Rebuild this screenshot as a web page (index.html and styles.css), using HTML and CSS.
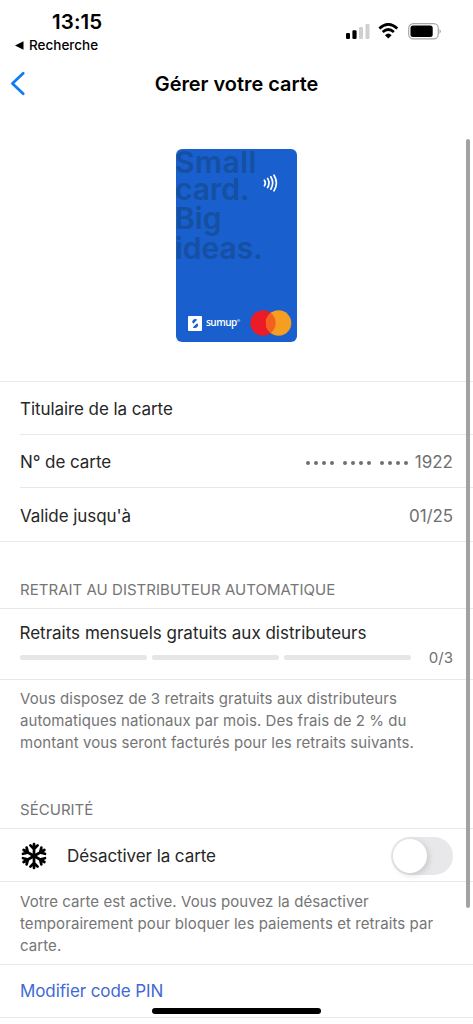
FILE: index.html
```html
<!DOCTYPE html>
<html lang="fr">
<head>
<meta charset="utf-8">
<title>Gérer votre carte</title>
<link rel="stylesheet" href="styles.css">
</head>
<body>
<div class="screen">
  <header class="status">
    <div class="status-left">
      <div class="clock">13:15</div>
      <div class="return-app"><svg width="9" height="9" viewBox="0 0 9 9"><path d="M0 4.5L8.5 0.3V8.7Z"/></svg><span>Recherche</span></div>
    </div>
    <div class="status-icons">
      <svg width="25" height="17" viewBox="0 0 25 17"><rect x="0" y="10" width="4" height="6" rx="1.2"/><rect x="6.4" y="7.2" width="4.2" height="8.8" rx="1.2"/><rect x="13" y="4" width="4" height="12" rx="1.2" fill="#d0d0d0"/><rect x="19.5" y="1" width="4" height="15" rx="1.2" fill="#d0d0d0"/></svg>
      <svg class="wifi" width="21" height="16" viewBox="0 0 21 16"><path d="M1.3 5.4Q10.3-2.6 19.3 5.4M4.7 9Q10.3 4 15.9 9" fill="none" stroke="#000" stroke-width="2.7"/><path d="M6.9 12.2Q10.3 9 13.7 12.2L10.3 15.6Z"/></svg>
      <svg class="battery" width="34" height="17" viewBox="0 0 34 17"><rect x=".7" y=".7" width="29.6" height="15.2" rx="4.6" fill="none" stroke="#a7a7a7" stroke-width="1.2"/><rect x="2.5" y="2.5" width="22.2" height="11.4" rx="2.5"/><path d="M31.5 6Q34.2 8.3 31.5 10.7Z" fill="#a7a7a7"/></svg>
    </div>
  </header>
  <nav class="nav">
    <svg class="back" width="16" height="25" viewBox="0 0 16 25"><path d="M13.2 2.2L2.4 12.5L13.2 22.8" fill="none" stroke="#117df5" stroke-width="2.8" stroke-linecap="round" stroke-linejoin="round"/></svg>
    <h1 class="title">Gérer votre carte</h1>
  </nav>
  <main>
    <section class="hero">
      <div class="card">
        <div class="slogan"><span class="s1">Small</span><span class="s2">card.</span><span class="s3">Big</span><span class="s4">ideas.</span></div>
        <svg class="nfc" width="15" height="18" viewBox="0 0 15 18" fill="none" stroke="#fff" stroke-width="1.7" stroke-linecap="round"><path d="M1.4 6.2Q3.2 8.9 1.4 11.8M4.6 4.4Q7.4 9 4.6 13.6M7.8 2.8Q11.6 9 7.8 15.2M11 1.2Q15.8 9 11 16.8"/></svg>
        <div class="brands">
          <svg width="14" height="15" viewBox="0 0 14 15"><rect width="14" height="15" rx="1" fill="#fff"/><path d="M4.9 6.8Q3.4 5.2 5.1 3.9Q7 2.3 9.1 3.8L5 8ZM9.2 7.5Q11.1 9.2 9.3 11Q7.2 12.9 4.9 11.5L9.2 7.4Z" fill="#195fcd"/><path d="M4.7 6.7L8 3.4M5.8 11.5L9.4 8" stroke="#195fcd" stroke-width="1.2"/></svg>
          <span class="sumup">sumup<sup>®</sup></span>
          <svg class="mc" width="42" height="26" viewBox="0 0 42 26"><circle cx="13" cy="13" r="12.7" fill="#eb1c27"/><circle cx="28.6" cy="13" r="12.7" fill="#f59e22"/><path d="M20.8 3A12.7 12.7 0 0 1 20.8 23A12.7 12.7 0 0 1 20.8 3Z" fill="#f26022"/></svg>
        </div>
      </div>
    </section>
    <section class="details">
      <div class="row row-holder"><span class="label l1">Titulaire de la carte</span></div>
      <div class="row row-number"><span class="label l2">N° de carte</span><span class="value number"><span class="dots"><i></i><i></i><i></i><i></i></span><span class="dots"><i></i><i></i><i></i><i></i></span><span class="dots"><i></i><i></i><i></i><i></i></span><span class="v1">1922</span></span></div>
      <div class="row row-expiry"><span class="label l3">Valide jusqu'à</span><span class="value v2">01/25</span></div>
    </section>
    <h2 class="heading h-atm"><span>RETRAIT AU DISTRIBUTEUR AUTOMATIQUE</span></h2>
    <section class="quota">
      <div class="label l4">Retraits mensuels gratuits aux distributeurs</div>
      <div class="meter"><b></b><b></b><b></b><span class="count">0/3</span></div>
    </section>
    <p class="note note-atm"><span class="n1">Vous disposez de 3 retraits gratuits aux distributeurs</span><br><span class="n2">automatiques nationaux par mois. Des frais de 2 % du</span><br><span class="n3">montant vous seront facturés pour les retraits suivants.</span></p>
    <h2 class="heading h-sec"><span>SÉCURITÉ</span></h2>
    <section class="freeze">
      <svg width="28" height="28" viewBox="-14 -14 28 28" fill="none" stroke="#000" stroke-width="2.7" stroke-linecap="round"><g id="arm"><path d="M0 0V-12M-3.6 -10.6L0 -7L3.6 -10.6"/></g><use href="#arm" transform="rotate(60)"/><use href="#arm" transform="rotate(120)"/><use href="#arm" transform="rotate(180)"/><use href="#arm" transform="rotate(240)"/><use href="#arm" transform="rotate(300)"/></svg>
      <span class="label l5">Désactiver la carte</span>
      <span class="toggle"><span class="knob"></span></span>
    </section>
    <p class="note note-sec"><span class="n4">Votre carte est active. Vous pouvez la désactiver</span><br><span class="n5">temporairement pour bloquer les paiements et retraits par</span><br><span class="n6">carte.</span></p>
    <div class="action"><a class="pin">Modifier code PIN</a></div>
  </main>
  <div class="scrollbar"></div>
  <div class="home"></div>
</div>
</body>
</html>
```
FILE: styles.css
```css
* { box-sizing: border-box; }
body { margin: 0; background: #fff; font-family: Inter, "Liberation Sans", sans-serif; color: #262626; }
.screen { position: relative; width: 473px; height: 1024px; overflow: hidden; }
svg { display: block; flex: none; }
span, .label { white-space: nowrap; }
.status { height: 60px; display: flex; justify-content: space-between; padding: 10px 31px 0 15px; color: #000; }
.clock { padding-left: 37px; font-size: 20.5px; line-height: 24px; font-weight: 600; letter-spacing: .1px; }
.return-app { display: flex; align-items: center; gap: 5px; height: 18px; margin-top: 2px; font-size: 13.5px; font-weight: 500; }
.status-icons { display: flex; padding-top: 13px; }
.wifi { margin-left: 7px; }
.battery { margin-left: 9px; }
.nav { height: 48px; display: flex; align-items: center; justify-content: center; position: relative; }
.back { position: absolute; left: 10px; top: 11px; }
.title { margin: 0; font-size: 19.9px; font-weight: 600; color: #000; white-space: nowrap; }
.hero { height: 273px; display: flex; justify-content: center; padding-top: 41px; }
.card { width: 121px; height: 193px; border-radius: 6px; background: #195fcd; position: relative; overflow: hidden; display: flex; flex-direction: column; justify-content: space-between; }
.slogan { display: flex; flex-direction: column; align-items: flex-start; margin: -1px 0 0 -1px; font-weight: 600; font-size: 30px; line-height: 29px; color: #1650a2; }
.s1 { letter-spacing: .5px; line-height: 28px; }
.s2 { line-height: 27px; }
.s3 { line-height: 31px; }
.nfc { position: absolute; left: 87px; top: 25px; }
.brands { display: flex; align-items: center; height: 26px; margin: 0 5px 6px 12px; }
.sumup { color: #fff; font-family: "Open Sans", sans-serif; font-size: 10px; font-weight: 600; margin: -2px 0 0 4px; line-height: 14px; letter-spacing: -.5px; }
.sumup sup { font-size: 4px; line-height: 0; }
.mc { margin-left: auto; }
.details { border-top: 1px solid #e8e8e8; border-bottom: 1px solid #e8e8e8; }
.row { margin-left: 20px; padding-right: 20px; display: flex; align-items: center; justify-content: space-between; }
.row + .row { border-top: 1px solid #e8e8e8; }
.row-holder { height: 52px; padding-top: 2px; }
.row-number { height: 53px; padding-top: 1px; }
.row-expiry { height: 54px; padding-top: 2px; }
.label { font-size: 17px; line-height: 24px; }
.l1, .l2, .l3, .l5 { letter-spacing: -.07px; }
.value { font-size: 17px; color: #707070; }
.v2 { letter-spacing: -.1px; }
.number { display: flex; align-items: center; }
.dots { display: flex; gap: 4px; margin-right: 9px; padding-top: 2px; }
.dots:nth-child(3) { margin-right: 7px; }
.dots i { width: 4px; height: 4px; border-radius: 50%; background: #707070; }
.heading { margin: 0; padding: 0 20px; display: flex; align-items: center; font-size: 15px; line-height: 22px; font-weight: 400; letter-spacing: .03px; color: #757575; }
.h-atm { height: 66px; padding-top: 30px; }
.quota { height: 72px; border-top: 1px solid #e8e8e8; border-bottom: 1px solid #e8e8e8; padding: 12px 20px 0 19.5px; }
.meter { display: flex; align-items: center; gap: 5px; height: 22px; margin-top: 1px; }
.meter b { width: 127px; height: 5px; border-radius: 3px; background: #e6e6e6; }
.count { margin-left: auto; font-size: 15px; color: #707070; }
.note { margin: 0; padding: 0 20px; font-size: 15px; line-height: 21.8px; letter-spacing: .07px; color: #757575; }
.note-atm { height: 110px; padding-top: 8px; }
.h-sec { height: 38px; padding-top: 2px; }
.freeze { height: 54px; border-top: 1px solid #e8e8e8; border-bottom: 1px solid #e8e8e8; padding: 1px 20px 0; display: flex; align-items: center; }
.l5 { margin-left: 19px; }
.toggle { width: 62px; height: 38px; margin-left: auto; border-radius: 19px; background: #e8e8ea; padding: 2px; }
.knob { display: block; width: 34px; height: 34px; border-radius: 50%; background: #fff; box-shadow: 2px 2px 6px rgba(0,0,0,.14); }
.note-sec { height: 82px; padding-top: 9px; }
.action { height: 54px; border-top: 1px solid #e8e8e8; border-bottom: 1px solid #e8e8e8; padding: 0 20px; display: flex; align-items: center; }
.pin { font-size: 17px; color: #4169d5; letter-spacing: -.1px; white-space: nowrap; }
.scrollbar { position: absolute; left: 466px; top: 139px; width: 3.5px; height: 769px; border-radius: 2px; background: #a2a2a2; }
.home { position: absolute; left: 152px; top: 1008px; width: 169px; height: 6px; border-radius: 3px; background: #000; }
```
